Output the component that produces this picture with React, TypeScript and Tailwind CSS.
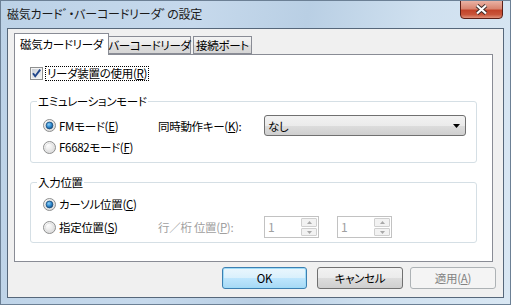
import React from "react";

const F = "font-['Noto_Sans_CJK_JP',sans-serif] [font-feature-settings:'palt'] whitespace-nowrap";

function Radio({ checked }: { checked?: boolean }) {
  return (
    <svg width="13" height="13" viewBox="0 0 13 13" className="shrink-0">
      <defs>
        <radialGradient id="rbg" cx="0.35" cy="0.3" r="0.8">
          <stop offset="0" stopColor="#ffffff" />
          <stop offset="1" stopColor="#d8d8d8" />
        </radialGradient>
        <radialGradient id="rdot" cx="0.4" cy="0.35" r="0.75">
          <stop offset="0" stopColor="#8fd0f6" />
          <stop offset="0.5" stopColor="#2f8ad0" />
          <stop offset="1" stopColor="#0d3f70" />
        </radialGradient>
      </defs>
      <circle cx="6.5" cy="6.5" r="6" fill="url(#rbg)" stroke="#8e8f8f" />
      <circle cx="6.5" cy="6.5" r="4.2" fill="none" stroke="#e2e2e2" />
      {checked && <circle cx="6.5" cy="6.5" r="3.4" fill="url(#rdot)" stroke="#1d4f7c" strokeWidth="0.8" />}
    </svg>
  );
}

function Checkbox() {
  return (
    <svg width="13" height="13" viewBox="0 0 13 13" className="shrink-0">
      <defs>
        <linearGradient id="cbg" x1="0" y1="0" x2="1" y2="1">
          <stop offset="0" stopColor="#cbcfd5" />
          <stop offset="1" stopColor="#f6f6f6" />
        </linearGradient>
      </defs>
      <rect x="0.5" y="0.5" width="12" height="12" fill="#f4f4f4" stroke="#8e8f8f" />
      <rect x="2" y="2" width="9" height="9" fill="url(#cbg)" />
      <path d="M3 6.2 L5.2 9.2 L10.2 2.6" fill="none" stroke="#21468a" strokeWidth="1.9" />
    </svg>
  );
}

function Spinner() {
  return (
    <div className="flex h-[22px] w-[55px] items-center border border-[#c2c2c2] bg-white pl-[3px]">
      <span className="flex-1 text-[12px] leading-none text-[#a0a0a0]">1</span>
      <div className="mr-[1px] flex h-[18px] w-[16px] flex-col gap-[1px]">
        <div className="flex h-[9px] items-center justify-center rounded-[1px] border border-[#cfcfcf] bg-[#f2f2f2]">
          <svg width="5" height="3" viewBox="0 0 5 3"><polygon points="0,3 5,3 2.5,0" fill="#a8a8a8" /></svg>
        </div>
        <div className="flex h-[8px] items-center justify-center rounded-[1px] border border-[#cfcfcf] bg-[#f2f2f2]">
          <svg width="5" height="3" viewBox="0 0 5 3"><polygon points="0,0 5,0 2.5,3" fill="#a8a8a8" /></svg>
        </div>
      </div>
    </div>
  );
}

export default function App() {
  return (
    <div className={`${F} relative h-[305px] w-[511px] overflow-hidden border border-[#6c8095] bg-[linear-gradient(100deg,#bcd2e7_0%,#c6d9ec_35%,#b9cfe4_55%,#cfe0ef_75%,#d9e7f3_100%)] text-[11.5px] tracking-[-0.3px] text-black`}>
      {/* Title bar */}
      <div className="flex h-[27px] items-start">
        <div className="mt-[6px] ml-[6px] text-[12px] leading-[14px] tracking-[-0.2px] text-[#1a1a1a]">磁気カードﾞ・バーコードリーダﾞの設定</div>
        <div className="mt-[-1px] mr-[7px] ml-auto flex h-[19px] w-[43px] items-center justify-center rounded-b-[4px] border border-[#5b1f17] bg-[linear-gradient(180deg,#eab2a4_0%,#d98570_45%,#c2442a_55%,#c9553a_80%,#e0917a_100%)]">
          <svg width="13" height="11" viewBox="0 0 13 11">
            <path d="M2 1.5 L11 9.5 M11 1.5 L2 9.5" stroke="#3a2a28" strokeWidth="4" />
            <path d="M2 1.5 L11 9.5 M11 1.5 L2 9.5" stroke="#ffffff" strokeWidth="2.2" />
          </svg>
        </div>
      </div>

      {/* Client area */}
      <div className="ml-[6px] flex h-[270px] w-[497px] flex-col border border-[#56677a] bg-[#f0f0f0]">
        {/* Tabs */}
        <div className="relative z-10 mt-[5px] ml-[6px] flex h-[20px] items-end">
          <div className="-mb-px flex h-[22px] w-[95px] items-start justify-center border border-b-0 border-[#898c95] bg-white pt-[3px] leading-[14px]">磁気カードリーダ</div>
          <div className="flex h-[18px] w-[82px] items-center justify-center border border-l-0 border-[#898c95] bg-[linear-gradient(180deg,#f3f3f3_0%,#ebebeb_50%,#dddddd_51%,#d6d6d6_100%)] leading-[14px]">バーコードリーダ</div>
          <div className="ml-[2px] flex h-[18px] w-[59px] items-center justify-center border border-[#898c95] bg-[linear-gradient(180deg,#f3f3f3_0%,#ebebeb_50%,#dddddd_51%,#d6d6d6_100%)] leading-[14px]">接続ポート</div>
        </div>

        {/* Panel */}
        <div className="ml-[6px] flex h-[208px] w-[479px] flex-col border border-[#898c95] bg-white">
          <div className="mt-[11px] ml-[15px] flex h-[15px] items-center">
            <Checkbox />
            <span className="ml-[2px] border border-dotted border-black px-[1px] leading-[13px]">リーダ装置の使用(<u>R</u>)</span>
          </div>

          <fieldset className="mt-[13px] ml-[15px] w-[447px] rounded-[3px] border border-[#d5dfe5] px-0 pb-[8px]">
            <legend className="ml-[6px] px-[1px] leading-[14px]">エミュレーションモード</legend>
            <div className="mt-[7px] flex h-[21px] items-center">
              <div className="flex w-[127px] items-center pl-[12px]">
                <Radio checked />
                <span className="ml-[3px] leading-[14px]">FMモード(<u>E</u>)</span>
              </div>
              <span className="w-[106px] leading-[14px]">同時動作キー(<u>K</u>):</span>
              <div className="flex h-[21px] w-[202px] items-center rounded-[3px] border border-[#707070] bg-[linear-gradient(180deg,#f2f2f2_0%,#ebebeb_50%,#dddddd_51%,#cfcfcf_100%)] pr-[5px] pl-[3px]">
                <span className="flex-1 leading-[14px]">なし</span>
                <svg width="7" height="4" viewBox="0 0 7 4"><polygon points="0,0 7,0 3.5,4" fill="#000" /></svg>
              </div>
            </div>
            <div className="mt-[4px] flex h-[14px] items-center pl-[12px]">
              <Radio />
              <span className="ml-[3px] leading-[14px]">F6682モード(<u>F</u>)</span>
            </div>
          </fieldset>

          <fieldset className="mt-[12px] ml-[15px] w-[447px] rounded-[3px] border border-[#d5dfe5] px-0 pb-[4px]">
            <legend className="ml-[6px] px-[1px] leading-[14px]">入力位置</legend>
            <div className="mt-[8px] flex h-[14px] items-center pl-[12px]">
              <Radio checked />
              <span className="ml-[3px] leading-[14px]">カーソル位置(<u>C</u>)</span>
            </div>
            <div className="mt-[5px] flex h-[22px] items-center">
              <div className="flex w-[127px] items-center pl-[12px]">
                <Radio />
                <span className="ml-[3px] leading-[14px]">指定位置(<u>S</u>)</span>
              </div>
              <span className="w-[106px] leading-[14px] text-[#a0a0a0]">行／桁 位置(<u>P</u>):</span>
              <Spinner />
              <div className="ml-[18px]">
                <Spinner />
              </div>
            </div>
          </fieldset>
        </div>

        {/* Buttons */}
        <div className="mt-[5px] flex items-start pl-[214px]">
          <div className="flex h-[22px] w-[85px] items-center justify-center rounded-[3px] border border-[#3c7fb1] bg-[linear-gradient(180deg,#eaf6fd_0%,#d9f0fc_50%,#bee6fd_51%,#a7d9f5_100%)] shadow-[inset_0_0_0_1px_#9fdcf8] leading-[14px]">OK</div>
          <div className="ml-[10px] flex h-[22px] w-[86px] items-center justify-center rounded-[3px] border border-[#707070] bg-[linear-gradient(180deg,#f2f2f2_0%,#ebebeb_50%,#dddddd_51%,#cfcfcf_100%)] leading-[14px]">キャンセル</div>
          <div className="ml-[7px] flex h-[22px] w-[86px] items-center justify-center rounded-[3px] border border-[#adb2b5] bg-[#f4f4f4] leading-[14px] text-[#838383]">適用(<u>A</u>)</div>
        </div>
      </div>
    </div>
  );
}
